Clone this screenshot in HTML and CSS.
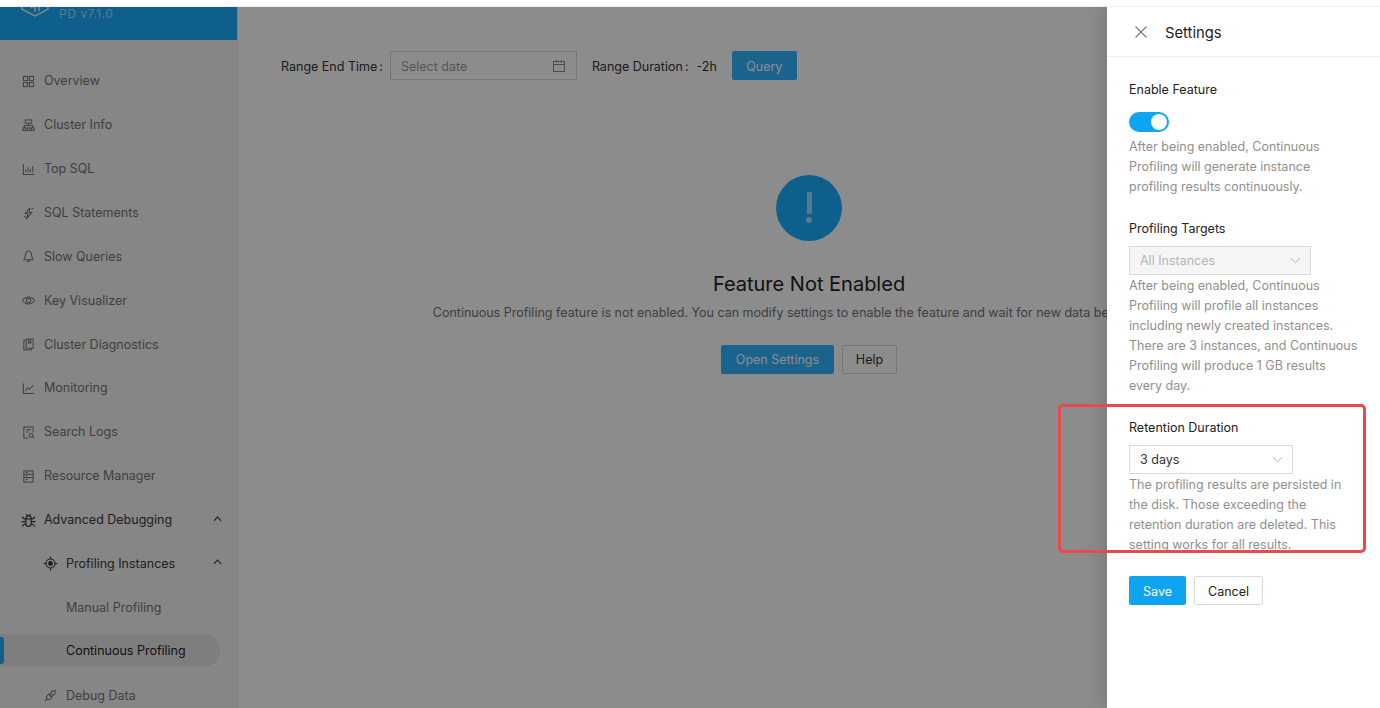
FILE: index.html
```html
<!DOCTYPE html>
<html>
	<head>
		<meta charset="utf-8">
		<title>Continuous Profiling</title>
		<link rel="stylesheet" href="styles.css">
	</head>
	<body>
		<div class="topStrip"></div>
		<div class="app">
			<div class="sidebar">
				<div class="brand">
					<svg class="logo" width="30" height="30" viewBox="0 0 30 30" fill="none" stroke="#fff" stroke-width="1.4"><path d="M15 2 L28 9.500 V18 L15 25 L2 18 V9.500 Z"/><path d="M11 17 L15 14 V21 M19 14 V20"/></svg>
					<span class="version">PD v7.1.0</span>
				</div>
				<div class="menu">
					<div class="item"><svg class="icon" viewBox="0 0 14 14"><rect x="1.500" y="1.500" width="4.500" height="4.500"/><rect x="8" y="1.500" width="4.500" height="4.500"/><rect x="1.500" y="8" width="4.500" height="4.500"/><rect x="8" y="8" width="4.500" height="4.500"/></svg>Overview</div>
					<div class="item"><svg class="icon" viewBox="0 0 14 14"><rect x="3.500" y="1" width="7" height="3.500"/><path d="M7 4.500V7M2.500 9.500V7H11.500V9.500"/><rect x="1" y="9.500" width="3" height="3"/><rect x="5.500" y="9.500" width="3" height="3"/><rect x="10" y="9.500" width="3" height="3"/></svg>Cluster Info</div>
					<div class="item"><svg class="icon" viewBox="0 0 14 14"><path d="M1.500 1V12.500H13M4 10V7M6.500 10V4.500M9 10V6.500M11.500 10V3.500"/></svg>Top SQL</div>
					<div class="item"><svg class="icon" viewBox="0 0 14 14"><path d="M8.500 1L3.500 7H6.500L4.500 13L10.500 6H7.500L8.500 1ZM10 2.500L12.500 1.500M2 11L3.500 9.500"/></svg>SQL Statements</div>
					<div class="item"><svg class="icon" viewBox="0 0 14 14"><path d="M7 1C4.800 1 3.800 3.200 3.800 5.500C3.800 7.500 2.500 8.500 2 10.500H12C11.500 8.500 10.200 7.500 10.200 5.500C10.200 3.200 9.200 1 7 1ZM5.500 10.500C5.500 13.500 8.500 13.500 8.500 10.500"/></svg>Slow Queries</div>
					<div class="item"><svg class="icon" viewBox="0 0 14 14"><path d="M0.500 7C3.800 2 10.200 2 13.500 7C10.200 12 3.800 12 0.500 7Z"/><circle cx="7" cy="7" r="2.300"/></svg>Key Visualizer</div>
					<div class="item"><svg class="icon" viewBox="0 0 14 14"><path d="M4.500 2.500H2V13H10V11M4.500 1H12V11H4.500ZM7 1V5.500L8.300 4.500L9.500 5.500V1"/></svg>Cluster Diagnostics</div>
					<div class="item"><svg class="icon" viewBox="0 0 14 14"><path d="M1.500 1.500V12.500H13M3.500 9.500L6 6.500L8 8L12 3.500"/></svg>Monitoring</div>
					<div class="item"><svg class="icon" viewBox="0 0 14 14"><path d="M7 13H2V1H12V7M4.500 4H9.500M4.500 6.500H7"/><circle cx="9.800" cy="10" r="2"/><path d="M11.300 11.500L13 13"/></svg>Search Logs</div>
					<div class="item"><svg class="icon" viewBox="0 0 14 14"><rect x="2" y="1" width="10" height="12"/><path d="M2 4.500H12M2 8H12M4 2.800H6M4 6.300H6M4 10H6"/></svg>Resource Manager</div>
					<div class="item open"><svg class="icon big" viewBox="0 0 14 14"><path d="M4.500 5.500C4.500 3.500 5.500 2.500 7 2.500C8.500 2.500 9.500 3.500 9.500 5.500V9.500C9.500 11.500 8.500 12.500 7 12.500C5.500 12.500 4.500 11.500 4.500 9.500ZM4.500 5.500H9.500M4.500 8H0.500M9.500 8H13.500M1 3.500L3 5.500H4.500M13 3.500L11 5.500H9.500M1 12.500L3 10.500H4.500M13 12.500L11 10.500H9.500M5 1L6 2.700M9 1L8 2.700"/></svg>Advanced Debugging<svg class="caret" viewBox="0 0 10 6"><path d="M1 5L5 1L9 5"/></svg></div>
					<div class="item sub open"><svg class="icon big" viewBox="0 0 14 14"><circle cx="7" cy="7" r="4.200"/><circle class="dot" cx="7" cy="7" r="1.700"/><path d="M7 0.500V2.800M7 11.200V13.500M0.500 7H2.800M11.200 7H13.500"/></svg>Profiling Instances<svg class="caret" viewBox="0 0 10 6"><path d="M1 5L5 1L9 5"/></svg></div>
					<div class="item leaf">Manual Profiling</div>
					<div class="item leaf selected">Continuous Profiling</div>
					<div class="item sub"><svg class="icon" viewBox="0 0 14 14"><path d="M5 5.500L8.500 9L7 10.500C6 11.500 4.500 11.500 3.500 10.500C2.500 9.500 2.500 8 3.500 7ZM9 9L5 5M7 4L8.500 2.500C9.500 1.500 10.500 2 11.300 2.800C12 3.500 12.500 4.500 11.500 5.500L10 7ZM3.500 10.500L1 13M11.300 2.800L13 1"/></svg>Debug Data</div>
				</div>
			</div>
			<div class="main">
				<div class="toolbar">
					<span class="fieldLabel">Range End Time</span>
					<div class="dateInput">
						<span>Select date</span>
						<svg width="14" height="14" viewBox="0 0 14 14" fill="none" stroke="#8a8a8a"><rect x="1.500" y="2.500" width="11" height="10"/><path d="M1.500 5.500H12.500M4.500 1V3.500M9.500 1V3.500"/></svg>
					</div>
					<span class="fieldLabel duration">Range Duration</span>
					<span class="durationValue">-2h</span>
					<button class="btn primary query">Query</button>
				</div>
				<div class="empty">
					<div class="emptyIcon"><span class="bar"></span><span class="point"></span></div>
					<div class="emptyTitle">Feature Not Enabled</div>
					<div class="emptyText">Continuous Profiling feature is not enabled. You can modify settings to enable the feature and wait for new data being generated.</div>
					<div class="emptyActions">
						<button class="btn primary settings">Open Settings</button>
						<button class="btn ghost">Help</button>
					</div>
				</div>
			</div>
			<div class="mask"></div>
			<div class="drawer">
				<div class="drawerHead">
					<svg width="14" height="14" viewBox="0 0 14 14" fill="none" stroke="#777" stroke-width="1.100"><path d="M1.500 1.500L12.500 12.500M12.500 1.500L1.500 12.500"/></svg>
					<span>Settings</span>
				</div>
				<div class="drawerBody">
					<div class="field">
						<div class="label">Enable Feature</div>
						<div class="control"><div class="switch"><span></span></div></div>
						<div class="help">After being enabled, Continuous Profiling will generate instance profiling results continuously.</div>
					</div>
					<div class="field">
						<div class="label">Profiling Targets</div>
						<div class="select disabled wide">All Instances<svg class="chevron" viewBox="0 0 12 7"><path d="M1 1L6 6L11 1"/></svg></div>
						<div class="help">After being enabled, Continuous Profiling will profile all instances including newly created instances. There are 3 instances, and Continuous Profiling will produce 1 GB results every day.</div>
					</div>
					<div class="field">
						<div class="label">Retention Duration</div>
						<div class="select">3 days<svg class="chevron" viewBox="0 0 12 7"><path d="M1 1L6 6L11 1"/></svg></div>
						<div class="help">The profiling results are persisted in the disk. Those exceeding the retention duration are deleted. This setting works for all results.</div>
					</div>
					<div class="actions">
						<button class="btn save">Save</button>
						<button class="btn cancel">Cancel</button>
					</div>
				</div>
			</div>
			<div class="callout"></div>
		</div>
	</body>
</html>
```

FILE: styles.css
```css
html, body {
	margin: 0;
	height: 708px;
	overflow: hidden;
	background-color: #fff;
	font-family: Inter, "Liberation Sans", sans-serif;
	font-size: 12.5px;
	line-height: 20px;
}
.topStrip {
	height: 7px;
	background-color: #fff;
	box-sizing: border-box;
	border-bottom: 1px solid #eee;
}
.app {
	position: relative;
	display: flex;
	height: 701px;
	overflow: hidden;
}

.sidebar {
	width: 237px;
	flex: none;
	background-color: #f4f4f4;
	border-right: 1px solid #e6e6e6;
	overflow: hidden;
}
.brand {
	display: flex;
	height: 33px;
	padding-left: 20px;
	background-color: #1badff;
	overflow: hidden;
}
.logo {
	flex: none;
	margin-top: -16px;
}
.version {
	margin-left: 9px;
	height: 13px;
	color: #fff;
	opacity: .6;
	font-size: 12px;
	line-height: 13px;
	letter-spacing: .5px;
}
.menu {
	padding-top: 19px;
}
.item {
	display: flex;
	align-items: center;
	position: relative;
	height: 43.860px;
	padding: 1px 0 0 22px;
	box-sizing: border-box;
	color: #747474;
	white-space: nowrap;
}
.icon {
	width: 13px;
	height: 13px;
	margin-right: 9px;
	flex: none;
	fill: none;
	stroke: currentColor;
	stroke-width: 1.100;
}
.icon.big {
	width: 15px;
	height: 15px;
	margin: 0 8px 0 -1px;
}
.item.open {
	color: #3a3a3a;
}
.item.sub {
	padding-left: 44px;
}
.item.leaf {
	padding-left: 66px;
}
.item .dot {
	fill: currentColor;
}
.caret {
	position: absolute;
	left: 213px;
	top: 18px;
	width: 9px;
	height: 6px;
	fill: none;
	stroke: currentColor;
	stroke-width: 1.300;
}
.selected {
	color: #222;
	width: 220px;
	height: 33px;
	margin: 5px 0 6px;
	background-color: #e6e6e6;
	border-radius: 0 17px 17px 0;
}
.selected::before {
	content: "";
	position: absolute;
	left: 0;
	top: 3px;
	width: 4px;
	height: 27px;
	background-color: #1badff;
	border-radius: 0 3px 3px 0;
}

.main {
	flex: 1;
	min-width: 0;
	background-color: #fff;
}
.toolbar {
	display: flex;
	align-items: center;
	padding: 44px 0 0 43px;
	height: 29px;
	color: #333;
}
.toolbar span {
	padding-top: 2px;
}
.fieldLabel::after {
	content: ":";
	margin: 0 7px 0 2px;
}
.dateInput {
	display: flex;
	align-items: center;
	justify-content: space-between;
	width: 165px;
	height: 27px;
	padding: 0 10px;
	border: 1px solid #d9d9d9;
	color: #9c9c9c;
}
.duration {
	margin-left: 15px;
}
.duration::after {
	margin-right: 8px;
}
.durationValue {
	margin-right: 15px;
}
.btn {
	height: 29px;
	box-sizing: border-box;
	border-radius: 2px;
	border: 1px solid transparent;
	font-family: inherit;
	font-size: 12.5px;
	padding: 0 14px;
}
.btn.primary {
	background-color: #1badff;
	color: #fff;
	opacity: .9;
}
.btn.query {
	width: 65px;
	padding: 1px 0 0;
}
.btn.settings {
	width: 113px;
	padding: 0;
}
.btn.ghost {
	width: 55px;
	padding: 0;
	background-color: #fff;
	border-color: #d9d9d9;
	color: #333;
}

.empty {
	display: flex;
	flex-direction: column;
	align-items: center;
	margin-top: 95px;
}
.emptyIcon {
	display: flex;
	flex-direction: column;
	align-items: center;
	width: 66px;
	height: 66px;
	border-radius: 50%;
	background-color: #1badff;
}
.emptyIcon .bar {
	width: 5px;
	height: 22px;
	margin-top: 17px;
	background-color: #fff;
	opacity: .6;
}
.emptyIcon .point {
	width: 6px;
	height: 6px;
	margin-top: 3px;
	border-radius: 50%;
	background-color: #fff;
	opacity: .6;
}
.emptyTitle {
	margin-top: 28px;
	font-size: 20px;
	line-height: 30px;
	color: #222;
}
.emptyText {
	margin-top: 4px;
	padding-left: 9px;
	color: #747474;
	white-space: nowrap;
}
.emptyActions {
	display: flex;
	gap: 8px;
	margin-top: 22px;
}

.mask {
	position: absolute;
	inset: 0;
	background-color: rgba(0, 0, 0, .45);
}
.drawer {
	position: absolute;
	top: 0;
	right: 0;
	bottom: 0;
	width: 273px;
	background-color: #fff;
	box-shadow: -6px 0 16px rgba(0, 0, 0, .12);
}
.drawerHead {
	display: flex;
	align-items: center;
	gap: 17px;
	height: 49px;
	padding-left: 27px;
	border-bottom: 1px solid #f0f0f0;
	font-size: 14.800px;
	color: #222;
}
.drawerHead span {
	padding-top: 2px;
}
.drawerBody {
	padding: 22px 22px 0;
}
.field {
	margin-bottom: 21px;
}
.label {
	padding-top: 1px;
	margin-bottom: 7px;
	color: #222;
}
.control {
	display: flex;
	align-items: center;
	height: 29px;
}
.switch {
	position: relative;
	width: 40px;
	height: 20px;
	border-radius: 10px;
	background-color: #0ea5f0;
}
.switch span {
	position: absolute;
	right: 2px;
	top: 2px;
	width: 16px;
	height: 16px;
	border-radius: 50%;
	background-color: #fff;
}
.help {
	padding-top: 1px;
	color: #8f8f8f;
}
.select {
	position: relative;
	display: flex;
	align-items: center;
	width: 164px;
	height: 29px;
	box-sizing: border-box;
	padding-left: 10px;
	border: 1px solid #d9d9d9;
	color: #333;
}
.select.wide {
	width: 182px;
}
.select.disabled {
	background-color: #f5f5f5;
	color: #b5b5b5;
}
.chevron {
	position: absolute;
	right: 9px;
	top: 10px;
	width: 11px;
	height: 7px;
	fill: none;
	stroke: #aaa;
}
.actions {
	display: flex;
	gap: 8px;
}
.btn.save {
	width: 57px;
	padding: 1px 0 0;
	background-color: #0ea5f0;
	color: #fff;
}
.btn.cancel {
	width: 69px;
	padding: 1px 0 0;
	background-color: #fff;
	border-color: #d9d9d9;
	color: #222;
}

.callout {
	position: absolute;
	left: 1058px;
	top: 397px;
	width: 308px;
	height: 149px;
	box-sizing: border-box;
	border: 3px solid #e8494a;
	border-radius: 5px;
}
```
